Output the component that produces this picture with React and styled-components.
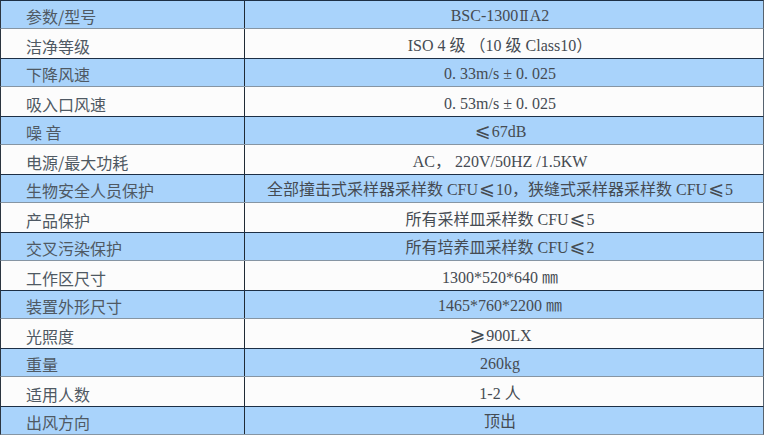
import styled, { createGlobalStyle } from "styled-components";

const GlobalStyle = createGlobalStyle`
  html, body {
    margin: 0;
    padding: 0;
    background: #ffffff;
  }
`;

const Table = styled.div`
  width: 764px;
  display: flex;
  flex-direction: column;
`;

const Row = styled.div`
  display: grid;
  grid-template-columns: 244px 1fr;
  height: 29px;
  box-sizing: border-box;
  background: ${(p) => (p.$blue ? "#a9d3fb" : "#fcfcfc")};
  border-left: 1px solid #2b3540;
  border-right: 1px solid #56626e;
  border-top: ${(p) => (p.$blue ? "1px solid #1d2f45" : "none")};
  border-bottom: ${(p) => (p.$blue ? "1px solid #8695a3" : "none")};
`;

const Label = styled.div`
  display: flex;
  align-items: flex-end;
  padding: 0 0 1px 25px;
  border-right: 1px solid #1f2a35;
  font-family: "Noto Sans CJK SC", "Noto Sans", sans-serif;
  font-size: 16px;
  line-height: 22px;
  color: #4f5963;
`;

const Value = styled.div`
  display: flex;
  align-items: flex-end;
  justify-content: center;
  padding: 0 8px 1px 0;
  font-family: "Liberation Serif", "Noto Sans CJK SC", serif;
  font-size: 16px;
  line-height: 22px;
  color: #454b52;
  white-space: pre;
`;

const ValueText = styled.span`
  display: block;
  height: 22px;
`;

const Sym = styled.span`
  font-family: ${(p) => (p.$serif ? '"DejaVu Serif", serif' : '"DejaVu Sans", sans-serif')};
  font-size: ${(p) => (p.$serif ? "14px" : "19px")};
  line-height: 0;
  margin: 0 1px;
`;

const specs = [
  ["参数/型号", <>BSC-1300<Sym $serif>Ⅱ</Sym>A2</>],
  ["洁净等级", "ISO 4 级 （10 级 Class10）"],
  ["下降风速", "0. 33m/s ± 0. 025"],
  ["吸入口风速", "0. 53m/s ± 0. 025"],
  ["噪 音", <><Sym>⩽</Sym>67dB</>],
  ["电源/最大功耗", "AC， 220V/50HZ /1.5KW"],
  [
    "生物安全人员保护",
    <>全部撞击式采样器采样数 CFU<Sym>⩽</Sym>10，狭缝式采样器采样数 CFU<Sym>⩽</Sym>5</>,
  ],
  ["产品保护", <>所有采样皿采样数 CFU<Sym>⩽</Sym>5</>],
  ["交叉污染保护", <>所有培养皿采样数 CFU<Sym>⩽</Sym>2</>],
  ["工作区尺寸", "1300*520*640 ㎜"],
  ["装置外形尺寸", "1465*760*2200 ㎜"],
  ["光照度", <><Sym>⩾</Sym>900LX</>],
  ["重量", "260kg"],
  ["适用人数", "1-2 人"],
  ["出风方向", "顶出"],
];

export default function App() {
  return (
    <>
      <GlobalStyle />
      <Table>
        {specs.map(([label, value], i) => (
          <Row key={label} $blue={i % 2 === 0}>
            <Label>{label}</Label>
            <Value>
              <ValueText>{value}</ValueText>
            </Value>
          </Row>
        ))}
      </Table>
    </>
  );
}
